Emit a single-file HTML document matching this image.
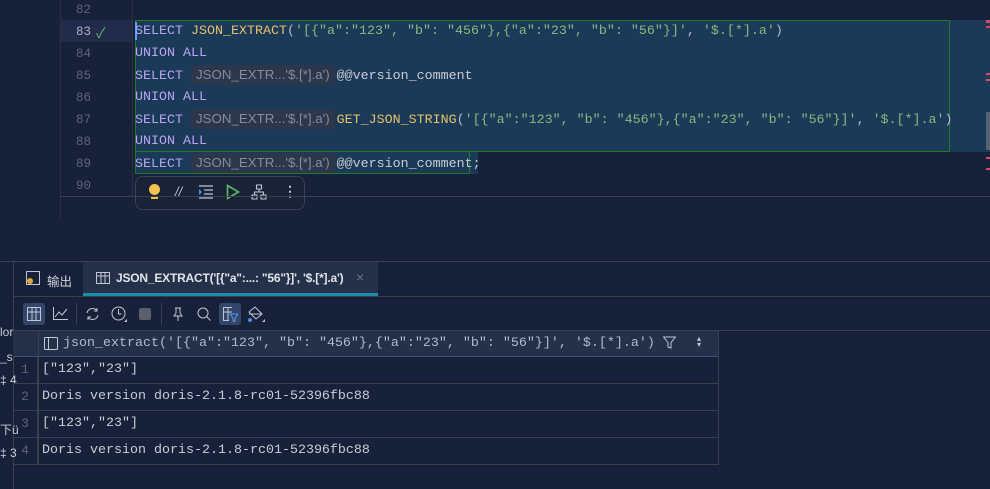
<!DOCTYPE html>
<html><head><meta charset="utf-8"><style>
*{margin:0;padding:0;box-sizing:border-box}
body{width:990px;height:489px;background:#18213a;overflow:hidden;position:relative;font-family:"Liberation Sans","Noto Sans CJK SC",sans-serif;color:#c8ccd4}
.abs{position:absolute}
.mono{font-family:"Liberation Mono",monospace;font-size:13.33px;white-space:pre}
.ln{position:absolute;left:76px;font-family:"Liberation Mono",monospace;font-size:12.5px;color:#5c6478}
.code{position:absolute;left:135px;height:22px;line-height:22px}
.k{color:#b9a3f2}.f{color:#e6c16a}.s{color:#8fb77c}.p{color:#b4bccb}.t{color:#c8ccd4}.b{color:#9fb3d9}
.hint{display:inline-block;background:#2d374b;color:#858d9c;font-family:"Liberation Sans",sans-serif;font-size:13.3px;padding:0 5px;height:20px;line-height:20px;border-radius:3px;margin:0 2px 0 0;vertical-align:0}
.row{position:absolute;left:13px;width:705px;height:27px;border-bottom:1px solid #3a3f4c}
.row .n{position:absolute;left:0;width:25px;height:26px;border-right:1px solid #3a3f4c;text-align:center;line-height:26px;color:#5c6478;font-family:"Liberation Mono",monospace;font-size:13px}
.row .v{position:absolute;left:29px;line-height:26px}
</style></head><body>
<div class="abs" style="left:60px;top:0;width:1px;height:218px;background:#2a3145"></div>
<div class="abs" style="left:132px;top:0;width:1px;height:196px;background:#2a3145"></div>
<div class="abs" style="left:61px;top:20px;width:71px;height:22px;background:#222c4a"></div>
<div class="abs" style="left:135px;top:20px;width:855px;height:132px;background:#1b3a58"></div>
<div class="abs" style="left:135px;top:152px;width:343px;height:22px;background:#1b3a58"></div>
<div class="abs" style="left:135px;top:20px;width:815px;height:132px;border:1px solid #1f7a2a"></div>
<div class="abs" style="left:135px;top:152px;width:335px;height:22px;border:1px solid #1f7a2a;border-top:none"></div>
<div class="abs" style="left:135px;top:22px;width:2px;height:18px;background:#5aa0ff"></div>
<div class="ln" style="top:3px">82</div>
<div class="ln" style="top:25px;color:#a8b0c0">83</div>
<div class="abs" style="left:96px;top:23px;color:#5fb865;font-size:14px">✓</div>
<div class="ln" style="top:47px">84</div><div class="ln" style="top:69px">85</div><div class="ln" style="top:91px">86</div><div class="ln" style="top:113px">87</div><div class="ln" style="top:135px">88</div><div class="ln" style="top:157px">89</div><div class="ln" style="top:179px">90</div>
<div class="code mono" style="top:21px"><span class="k">SELECT</span> <span class="f">JSON_EXTRACT</span><span class="p">(</span><span class="s">'[{"a":"123", "b": "456"},{"a":"23", "b": "56"}]'</span><span class="p">, </span><span class="s">'$.[*].a'</span><span class="p">)</span></div>
<div class="code mono" style="top:43px"><span class="k">UNION ALL</span></div>
<div class="code mono" style="top:65px"><span class="k">SELECT</span> <span class="hint">JSON_EXTR...'$.[*].a')</span><span class="t">@@version_comment</span></div>
<div class="code mono" style="top:87px"><span class="k">UNION ALL</span></div>
<div class="code mono" style="top:109px"><span class="k">SELECT</span> <span class="hint">JSON_EXTR...'$.[*].a')</span><span class="f">GET_JSON_STRING</span><span class="p">(</span><span class="s">'[{"a":"123", "b": "456"},{"a":"23", "b": "56"}]'</span><span class="p">, </span><span class="s">'$.[*].a'</span><span class="p">)</span></div>
<div class="code mono" style="top:131px"><span class="k">UNION ALL</span></div>
<div class="code mono" style="top:153px"><span class="k">SELECT</span> <span class="hint">JSON_EXTR...'$.[*].a')</span><span class="t">@@version_comment;</span></div>
<div class="abs" style="left:986px;top:20px;width:4px;height:3px;background:#d9486a"></div>
<div class="abs" style="left:986px;top:26px;width:4px;height:2px;background:#d9486a"></div>
<div class="abs" style="left:986px;top:73px;width:4px;height:2px;background:#d9486a"></div>
<div class="abs" style="left:986px;top:79px;width:4px;height:2px;background:#d9486a"></div>
<div class="abs" style="left:986px;top:112px;width:4px;height:38px;background:#596275"></div>
<div class="abs" style="left:986px;top:157px;width:4px;height:2px;background:#d9486a"></div>
<div class="abs" style="left:986px;top:168px;width:4px;height:2px;background:#d9486a"></div>
<div class="abs" style="left:135px;top:176px;width:170px;height:34px;background:#1a2238;border:1px solid #3a4258;border-radius:8px"></div>
<div class="abs" style="left:149px;top:184px;width:11px;height:11px;border-radius:50%;background:#f2c14e"></div>
<div class="abs" style="left:151px;top:196px;width:7px;height:3px;background:#f2c14e"></div>
<div class="abs" style="left:175px;top:184px;color:#c0c6d2;font-size:13px;font-style:italic">//</div>
<svg class="abs" style="left:199px;top:185px" width="14" height="14"><path d="M0 1h14M5 5h9M5 9h9M0 13h14" stroke="#c0c6d2" stroke-width="1.2"/><path d="M0 4l3 3-3 3z" fill="#4a8ef0"/></svg>
<svg class="abs" style="left:226px;top:184px" width="14" height="16"><path d="M1.5 1.5L12.5 8 1.5 14.5z" fill="none" stroke="#5fb865" stroke-width="1.6"/></svg>
<svg class="abs" style="left:251px;top:184px" width="16" height="16"><path d="M5.5 1h5v4h-5zM1 11h5v4H1zM10 11h5v4h-5zM8 5v3M3.5 11V8h9v3" fill="none" stroke="#c0c6d2" stroke-width="1.1"/></svg>
<div class="abs" style="left:283px;top:183px;color:#c0c6d2;font-size:14px;font-weight:bold">⋮</div>
<div class="abs" style="left:60px;top:196px;width:930px;height:1px;background:#3a3f4c"></div>
<div class="abs" style="left:0;top:261px;width:990px;height:1px;background:#3a3f4c"></div>
<div class="abs" style="left:13px;top:261px;width:1px;height:228px;background:#3a3f4c"></div>
<div class="abs" style="left:13px;top:296px;width:977px;height:1px;background:#3a3f4c"></div>
<div class="abs" style="left:13px;top:330px;width:977px;height:1px;background:#3a3f4c"></div>
<div class="abs" style="left:0;top:325px;font-size:12px;color:#c8ccd4">lor</div>
<div class="abs" style="left:0;top:350px;font-size:12px;color:#c8ccd4">_s</div>
<div class="abs" style="left:0;top:373px;font-size:12px;color:#c8ccd4">‡ 4</div>
<div class="abs" style="left:0;top:421px;font-size:12px;color:#c8ccd4">下ü</div>
<div class="abs" style="left:0;top:446px;font-size:12px;color:#c8ccd4">‡ 3</div>
<svg class="abs" style="left:26px;top:271px" width="14" height="14"><rect x="0.5" y="0.5" width="13" height="13" fill="none" stroke="#c0c6d2"/><circle cx="4" cy="10" r="3" fill="#e3a73a"/></svg>
<div class="abs" style="left:47px;top:271px;font-size:12.5px;color:#d0d4dc">输出</div>
<div class="abs" style="left:83px;top:262px;width:295px;height:34px;background:#253049"></div>
<div class="abs" style="left:83px;top:293px;width:295px;height:3px;background:#1e8ca8"></div>
<svg class="abs" style="left:96px;top:272px" width="14" height="12"><rect x="0.5" y="0.5" width="13" height="11" fill="none" stroke="#c0c6d2"/><path d="M0 4h14M5 0v12M9 0v12" stroke="#c0c6d2"/></svg>
<div class="abs" style="left:116px;top:271px;font-size:12px;color:#e0e4ea;font-weight:bold;letter-spacing:-0.2px">JSON_EXTRACT('[{"a":...: "56"}]', '$.[*].a')</div>
<div class="abs" style="left:356px;top:269px;font-size:14px;color:#6c7488">×</div>
<div class="abs" style="left:23px;top:303px;width:22px;height:22px;background:#34456a;border-radius:3px"></div>
<svg class="abs" style="left:27px;top:307px" width="14" height="14"><rect x="0.5" y="0.5" width="13" height="13" fill="none" stroke="#c0c6d2"/><path d="M0 5h14M5 0v14M9 0v14" stroke="#c0c6d2"/></svg>
<svg class="abs" style="left:53px;top:307px" width="15" height="13"><path d="M0.5 0v12.5H15M2 10l4-5 3 3 5-6" fill="none" stroke="#c0c6d2"/></svg>
<div class="abs" style="left:76px;top:303px;width:1px;height:22px;background:#3a3f4c"></div>
<svg class="abs" style="left:85px;top:307px" width="15" height="14"><path d="M2 6a5.5 5.5 0 0 1 10-2M13 8a5.5 5.5 0 0 1-10 2M12 1v3H9M3 13v-3h3" fill="none" stroke="#c0c6d2"/></svg>
<svg class="abs" style="left:111px;top:306px" width="17" height="17"><circle cx="7.5" cy="7.5" r="6.5" fill="none" stroke="#c0c6d2"/><path d="M7.5 3v5h3" fill="none" stroke="#c0c6d2"/><path d="M13 16h3v-3z" fill="#c0c6d2"/></svg>
<div class="abs" style="left:139px;top:308px;width:12px;height:12px;background:#5a5f6a;border-radius:2px"></div>
<div class="abs" style="left:161px;top:303px;width:1px;height:22px;background:#3a3f4c"></div>
<svg class="abs" style="left:172px;top:307px" width="12" height="15"><path d="M3 1h6M4 1v5L2 9h8L8 6V1M6 9v5" fill="none" stroke="#c0c6d2"/></svg>
<svg class="abs" style="left:197px;top:307px" width="14" height="14"><circle cx="6" cy="6" r="5" fill="none" stroke="#c0c6d2"/><path d="M9.5 9.5l4 4" stroke="#c0c6d2"/></svg>
<div class="abs" style="left:219px;top:303px;width:22px;height:22px;background:#34456a;border-radius:3px"></div>
<svg class="abs" style="left:223px;top:307px" width="15" height="15"><path d="M9 .5H.5v13H6M.5 5H9M5 .5v13" fill="none" stroke="#c0c6d2"/><path d="M7 7h8l-3 4v4l-2-1v-3z" fill="none" stroke="#4a9ef0"/></svg>
<svg class="abs" style="left:247px;top:305px" width="18" height="18"><path d="M8 2l7 7-6 5-7-7z M2 9h13" fill="none" stroke="#c0c6d2"/><circle cx="3" cy="15" r="2" fill="#4a8ef0"/><path d="M15 17h3v-3z" fill="#c0c6d2"/></svg>
<div class="abs" style="left:13px;top:331px;width:705px;height:26px;background:#253049;border-bottom:1px solid #3c5080"></div>
<div class="abs" style="left:38px;top:331px;width:1px;height:134px;background:#3a3f4c"></div>
<div class="abs" style="left:718px;top:331px;width:1px;height:134px;background:#3a3f4c"></div>
<svg class="abs" style="left:44px;top:337px" width="14" height="13"><rect x="0.5" y="0.5" width="13" height="12" rx="1" fill="none" stroke="#c0c6d2"/><path d="M4.5 0v13" stroke="#c0c6d2"/></svg>
<div class="abs mono" style="left:63px;top:334px;line-height:20px;font-size:13.33px;color:#aebbd6">json_extract('[{"a":"123", "b": "456"},{"a":"23", "b": "56"}]', '$.[*].a')</div>
<svg class="abs" style="left:663px;top:336px" width="13" height="13"><path d="M.5 1h12L8 6.5V12l-3-1V6.5z" fill="none" stroke="#c0c6d2"/></svg>
<div class="abs" style="left:697px;top:336px;font-size:8px;color:#c0c6d2;line-height:6px">▴<br>▾</div>
<div class="row" style="top:357px"><div class="n">1</div><div class="v mono">["123","23"]</div></div>
<div class="row" style="top:384px"><div class="n">2</div><div class="v mono">Doris version doris-2.1.8-rc01-52396fbc88</div></div>
<div class="row" style="top:411px"><div class="n">3</div><div class="v mono">["123","23"]</div></div>
<div class="row" style="top:438px"><div class="n">4</div><div class="v mono">Doris version doris-2.1.8-rc01-52396fbc88</div></div>
</body></html>
